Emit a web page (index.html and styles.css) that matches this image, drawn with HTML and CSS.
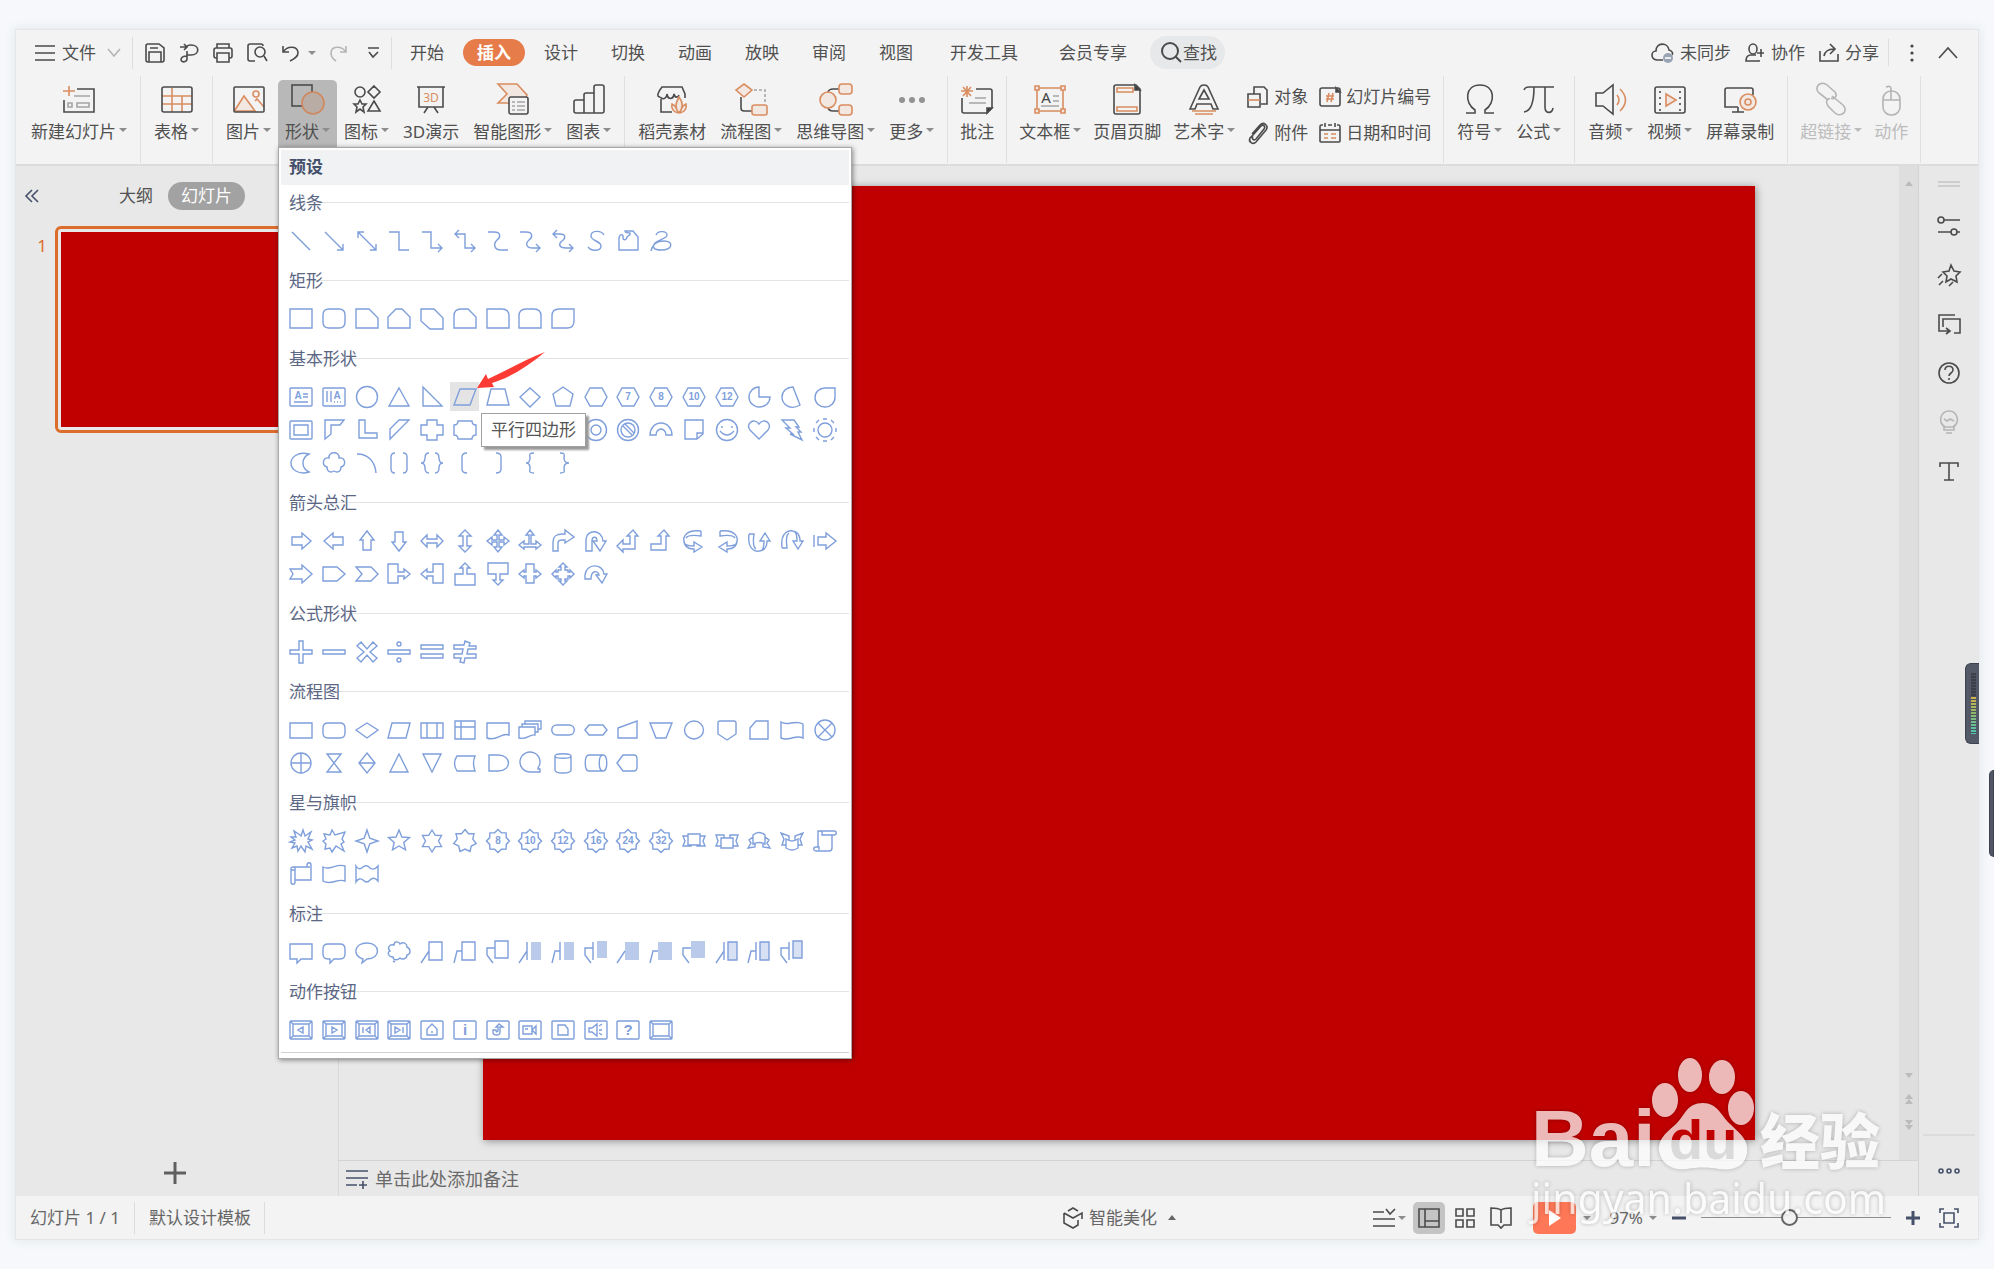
FILE: index.html
```html
<!DOCTYPE html>
<html lang="zh-CN">
<head>
<meta charset="utf-8">
<title>演示文稿</title>
<link rel="stylesheet" href="styles.css">
</head>
<body>
<div class="app">
  <header class="menubar">
    <button class="mb file"><svg width="20" height="20" viewBox="0 0 20 20"><path d="M0 3H20M0 10H20M0 17H20"/></svg>文件<svg class="pale chev" width="14" height="10" viewBox="0 0 14 10"><path d="M1 1L7 8L13 1"/></svg></button>
    <i class="vline"></i>
    <div class="quick">
      <button aria-label="保存"><svg width="20" height="20" viewBox="0 0 20 20"><path d="M1 3Q1 1 3 1H14L19 5V17Q19 19 17 19H3Q1 19 1 17zM4 19V9H16V19M5 5H13"/></svg></button>
      <button aria-label="输出"><svg width="20" height="20" viewBox="0 0 20 20"><path d="M1 4H8M5 1L8 4L5 7M8 4Q8 2 12 2C21 2 21 12 12 12H8V16C8 19 3 20 2 17C2 14 4 13 8 13M8 12V8"/></svg></button>
      <button aria-label="打印"><svg width="20" height="20" viewBox="0 0 20 20"><path d="M4 5V1H16V5M4 15H3Q1 15 1 13V7Q1 5 3 5H17Q19 5 19 7V13Q19 15 17 15H16M4 10H16V19H4z"/></svg></button>
      <button aria-label="预览"><svg width="21" height="20" viewBox="0 0 21 20"><path d="M8 18H3Q1 18 1 16V3Q1 1 3 1H14Q16 1 16 3M17 13L20 18"/><ellipse cx="13" cy="9" rx="5" ry="5"/></svg></button>
      <button class="undo" aria-label="撤销"><svg width="17" height="18" viewBox="0 0 17 18"><path d="M1 2V8H7M1 8C6 1 16 2 16 9C16 13 12 15 8 17"/></svg><i class="caret"></i></button>
      <button class="pale redo" aria-label="恢复"><svg width="17" height="18" viewBox="0 0 17 18"><path d="M16 2V8H10M16 8C11 1 1 2 1 9C1 13 3 15 6 17"/></svg></button>
      <button aria-label="更多命令"><svg width="11" height="12" viewBox="0 0 11 12"><path d="M0 1H11M1 5L5 10L10 5"/></svg></button>
    </div>
    <i class="vline"></i>
    <nav class="tabs">
      <button>开始</button><button class="on">插入</button><button>设计</button><button>切换</button><button>动画</button><button>放映</button><button>审阅</button><button>视图</button><button class="wide">开发工具</button><button class="wide">会员专享</button>
      <button class="find"><svg width="22" height="22" viewBox="0 0 22 22"><ellipse cx="9" cy="9" rx="8" ry="8"/><path d="M14 14L20 20"/></svg>查找</button>
    </nav>
    <div class="account">
      <button class="mb"><svg width="23" height="22" viewBox="0 0 23 22"><path d="M12 18H6C-1 17 0 9 5 9C5 0 17 0 18 8C22 9 22 12 21 13"/><circle cx="17" cy="16" r="5" fill="#98a3b3" stroke="none"/><path d="M14 16H20" stroke="#fff"/></svg>未同步</button>
      <button class="mb"><svg width="20" height="20" viewBox="0 0 20 20"><ellipse cx="8" cy="6" rx="4" ry="5"/><path d="M11 12H6Q1 12 1 18H14V17M12 10H19M16 6V14"/></svg>协作</button>
      <button class="mb"><svg width="20" height="20" viewBox="0 0 20 20"><path d="M1 8V18H19V11M5 13C6 8 9 6 15 6M11 1L16 6L11 11"/></svg>分享</button>
    </div>
    <i class="vline short"></i>
    <button class="more" aria-label="更多"><svg width="4" height="18" viewBox="0 0 4 18"><g fill="#444" stroke="none"><circle cx="2" cy="2" r="1.6"/><circle cx="2" cy="9" r="1.6"/><circle cx="2" cy="16" r="1.6"/></g></svg></button>
    <button aria-label="折叠功能区"><svg width="20" height="12" viewBox="0 0 20 12"><path d="M1 11L10 1L19 11"/></svg></button>
  </header>

  <div class="ribbon">
    <div class="group">
      <button class="tool"><svg viewBox="0 0 32 32"><path d="M14 6H31V29H1V17"/><path class="o" d="M6 3V13M0 8H12"/><path class="g" d="M11 13H27M14 20H26V24H14zM5 20H9V24H5z"/></svg><span>新建幻灯片<i class="caret"></i></span></button>
    </div>
    <div class="group">
      <button class="tool"><svg viewBox="0 0 32 32"><path class="o" d="M1 13H31M1 21H31M11 5V29M21 13V29"/><rect x="1" y="4" width="30" height="25" rx="2"/></svg><span>表格<i class="caret"></i></span></button>
    </div>
    <div class="group">
      <button class="tool"><svg viewBox="0 0 32 32"><path class="of" d="M2 27L11 13L22 28H2z"/><path class="o" d="M22 18L24 16L31 24"/><rect x="1" y="4" width="30" height="25" rx="1"/><circle class="o" cx="23" cy="11" r="3"/></svg><span>图片<i class="caret"></i></span></button>
      <div class="anchor">
        <button class="tool on" aria-expanded="true"><svg viewBox="0 0 32 32"><rect x="0" y="2" width="20" height="21"/><ellipse cx="21" cy="20" rx="11" ry="11" fill="#b9aca5" stroke="#d1875c"/></svg><span>形状<i class="caret"></i></span></button>
        <section class="shapes" id="shapes" aria-label="形状">
          <h2>预设</h2>
          <div class="tip" role="tooltip">平行四边形</div>
          <svg class="pointer" width="70" height="38" viewBox="0 0 70 38"><path d="M1 37L10 23L12 28C30 20 48 9 69 1C52 15 34 27 16 32L18 36z" fill="#fd3b35" stroke="none"/></svg>
        </section>
      </div>
      <button class="tool"><svg viewBox="0 0 32 32"><ellipse cx="9" cy="9" rx="5" ry="5"/><path d="M23 3L29 9L23 15L17 9zM9 17L11 21H15L12 24L13 29L9 26L5 29L6 24L3 21H7zM23 18L29 28H17z"/></svg><span>图标<i class="caret"></i></span></button>
      <button class="tool"><svg viewBox="0 0 32 32"><path d="M2 4H30M4 4V24H28V4M13 24L9 30M19 24L23 30"/><text x="16" y="19" font-size="12" text-anchor="middle" class="ot">3D</text></svg><span>3D演示</span></button>
      <button class="tool"><svg viewBox="0 0 32 32"><path class="of" d="M1 1H20L30 12L26 20H1L10 11z"/><rect x="12" y="14" width="19" height="17" rx="2" fill="#f3f3f3"/><path class="g" d="M15 19H18M20 19H28M15 23H18M20 23H28M15 27H18M20 27H28"/></svg><span>智能图形<i class="caret"></i></span></button>
      <button class="tool"><svg viewBox="0 0 32 32"><path d="M1 19Q1 17 3 17H11V30H3Q1 30 1 28zM11 30V12Q11 10 13 10H21V30zM21 30V4Q21 2 23 2H29Q31 2 31 4V28Q31 30 29 30z"/></svg><span>图表<i class="caret"></i></span></button>
    </div>
    <div class="group">
      <button class="tool"><svg viewBox="0 0 32 32"><path d="M5 16V29H16M4 14C0 14 2 9 6 4H26L29 11V15M4 14C8 18 11 14 11 11C12 17 17 17 18 11C19 15 22 15 23 12"/><path class="of" d="M23 30C18 25 20 19 23 14C27 19 27 25 23 30zM22 30C17 29 15 25 16 21C19 22 21 26 22 30M24 30C29 29 31 25 30 21C27 22 25 26 24 30"/></svg><span>稻壳素材</span></button>
      <button class="tool"><svg viewBox="0 0 32 32"><path d="M6 14V25Q6 28 9 28H17"/><path class="g" stroke-dasharray="3 2" d="M19 7H30V21"/><path class="of" d="M9 1L17 7L9 14L1 7zM20 22H30Q32 22 32 24V30Q32 32 30 32H20Q17 32 17 30V24Q17 22 20 22z"/></svg><span>流程图<i class="caret"></i></span></button>
      <button class="tool"><svg viewBox="0 0 32 32"><path d="M8 9Q9 6 13 6H19M8 25Q9 28 13 28H19"/><ellipse class="of" cx="8" cy="17" rx="8" ry="8"/><rect class="of" x="19" y="1" width="13" height="10" rx="3"/><rect class="of" x="19" y="22" width="13" height="10" rx="3"/></svg><span>思维导图<i class="caret"></i></span></button>
      <button class="tool"><svg viewBox="0 0 32 32"><g fill="#929292" stroke="none"><circle cx="6" cy="17" r="3"/><circle cx="16" cy="17" r="3"/><circle cx="26" cy="17" r="3"/></g></svg><span>更多<i class="caret"></i></span></button>
    </div>
    <div class="group snug">
      <button class="tool"><svg viewBox="0 0 32 32"><path d="M15 6H29Q31 6 31 8V25L26 30H3Q1 30 1 28V15"/><path d="M31 25L26 30V25z" fill="#333"/><path class="g" d="M14 15H25M8 20H25"/><path class="o" d="M6 3V14M0 8H12M2 4L10 13M10 4L2 13"/></svg><span>批注</span></button>
    </div>
    <div class="group snug">
      <button class="tool"><svg viewBox="0 0 32 32"><path class="o" d="M3 5H29V28H3z"/><path class="of" d="M1 3H5V7H1zM27 3H31V7H27zM1 26H5V30H1zM27 26H31V30H27z"/><path class="g" d="M19 13H25M19 18H25M7 23H25"/><text x="12" y="20" font-size="15" text-anchor="middle" class="dt">A</text></svg><span>文本框<i class="caret"></i></span></button>
      <button class="tool"><svg viewBox="0 0 32 32"><path d="M3 4Q3 2 5 2H25L29 6V29Q29 31 27 31H5Q3 31 3 29z"/><path d="M24 2V7H29z" fill="#333"/><path class="o" d="M6 5H22V9H6zM6 24H26V28H6z"/></svg><span>页眉页脚</span></button>
      <button class="tool"><svg viewBox="0 0 32 32"><path d="M2 26L12 4Q13 2 16 2Q19 2 20 4L30 26H25L23 21H9L7 26zM11 16H21L16 7z"/><path class="o" d="M4 28H28M7 31H25"/></svg><span>艺术字<i class="caret"></i></span></button>
      <div class="pairs">
        <button><svg width="22" height="22" viewBox="0 0 22 22"><path d="M7 8V1H17L20 4V18H14M1 8H13V21H1z"/><path class="o" d="M1 14H13"/></svg>对象</button>
        <button><svg width="22" height="22" viewBox="0 0 22 22"><rect x="1" y="2" width="20" height="18" rx="2"/><path d="M17 2L21 6H17z" fill="#333"/><path class="o" d="M10 7L8 16M14 7L12 16M7 10H15M7 13H15"/></svg>幻灯片编号</button>
        <button><svg width="22" height="22" viewBox="0 0 22 22"><path d="M6 13L14 4C16 2 19 4 17 7L9 17C7 19 4 17 6 14M6 13L3 16C1 20 6 23 9 20L19 8C22 4 17 -1 13 3L5 12"/></svg>附件</button>
        <button><svg width="22" height="22" viewBox="0 0 22 22"><path d="M4 3H2Q1 3 1 5V19Q1 20 2 20H20Q21 20 21 19V5Q21 3 20 3H18M9 3H13M6 1V5M16 1V5M1 8H21"/><path class="o" d="M5 12H9M12 12H17M5 16H9M12 16H17"/></svg>日期和时间</button>
      </div>
    </div>
    <div class="group">
      <button class="tool"><svg viewBox="0 0 32 32"><path d="M2 30H11V27C0 20 1 2 16 2C31 2 32 20 21 27V30H30"/></svg><span>符号<i class="caret"></i></span></button>
      <button class="tool"><svg viewBox="0 0 32 32"><path d="M1 7Q2 4 6 4H31M11 4C11 17 9 28 1 29M22 4V24C22 31 29 31 30 25"/></svg><span>公式<i class="caret"></i></span></button>
    </div>
    <div class="group">
      <button class="tool"><svg viewBox="0 0 32 32"><path d="M1 10H8L18 2V31L8 23H1z"/><path class="o" d="M22 12Q26 17 22 22M25 6Q36 17 25 28"/></svg><span>音频<i class="caret"></i></span></button>
      <button class="tool"><svg viewBox="0 0 32 32"><rect x="1" y="4" width="30" height="26" rx="2"/><path stroke-dasharray="2 4" d="M6 8V28M26 8V28"/><path class="of" d="M12 11L22 17L12 23z"/></svg><span>视频<i class="caret"></i></span></button>
      <button class="tool"><svg viewBox="0 0 32 32"><path d="M29 12V7Q29 5 27 5H3Q1 5 1 7V24H14M14 24V29M8 29H20"/><circle class="of" cx="24" cy="19" r="8"/><circle class="o" cx="24" cy="19" r="3"/></svg><span>屏幕录制</span></button>
    </div>
    <div class="group snug off">
      <button class="tool" disabled><svg viewBox="0 0 32 32"><path d="M13 17L4 10C-2 4 6 -3 12 2L20 9C23 13 19 17 16 15M17 13L28 22C34 28 26 35 20 30L13 23C10 19 12 15 15 16"/></svg><span>超链接<i class="caret"></i></span></button>
      <button class="tool" disabled><svg viewBox="0 0 32 32"><rect x="8" y="8" width="17" height="24" rx="8"/><path d="M8 17H25M16 17V6Q16 2 11 4"/></svg><span>动作</span></button>
    </div>
  </div>

  <main class="work">
    <aside class="outline">
      <div class="outline-head">
        <button aria-label="收起"><svg class="navy" width="14" height="14" viewBox="0 0 14 14"><path d="M7 1L1 7L7 13M13 1L7 7L13 13"/></svg></button>
        <div class="switch"><button>大纲</button><button class="on">幻灯片</button></div>
      </div>
      <div class="thumb-row"><span>1</span><button class="thumb" aria-label="幻灯片 1"></button></div>
      <button class="add" aria-label="新建幻灯片"><svg width="22" height="22" viewBox="0 0 22 22"><path d="M11 0V22M0 11H22"/></svg></button>
    </aside>
    <div class="stage">
      <div class="canvas">
        <div class="slide"></div>
        <div class="scroll">
          <i class="up"></i>
          <div><i class="down"></i><span><i class="up"></i><i class="up"></i></span><span><i class="down"></i><i class="down"></i></span></div>
        </div>
      </div>
      <label class="notes"><svg class="navy" width="22" height="20" viewBox="0 0 22 20"><path d="M0 2H22M0 9H22M0 16H11M13 16H21M17 12V20"/></svg><input type="text" placeholder="单击此处添加备注" aria-label="备注"></label>
    </div>
    <aside class="rail">
      <svg class="grip" width="22" height="6" viewBox="0 0 22 6"><path d="M0 1H22M0 5H22"/></svg>
      <button aria-label="属性"><svg width="22" height="22" viewBox="0 0 22 22"><path d="M6 5H22M0 17H13M19 17H22"/><circle cx="3" cy="5" r="3"/><circle cx="16" cy="17" r="3"/></svg></button>
      <button aria-label="动画"><svg width="22" height="22" viewBox="0 0 22 22"><path d="M13 1L16 7L22 8L18 12L19 18L13 15L8 18L9 12L5 8L11 7zM4 10L0 14M5 17L1 21M15 18L11 22"/></svg></button>
      <button aria-label="切换"><svg width="22" height="22" viewBox="0 0 22 22"><path d="M17 2H1V18H11M8 15L12 18L8 21M5 14V6H22V20H16"/></svg></button>
      <button aria-label="帮助"><svg width="22" height="22" viewBox="0 0 22 22"><circle cx="11" cy="11" r="10"/><path d="M7 8C7 3 15 3 15 8C15 11 11 11 11 14M11 16V18"/></svg></button>
      <button class="pale" aria-label="灵感"><svg width="22" height="24" viewBox="0 0 22 24"><path d="M7 17C-1 12 3 1 11 1C19 1 23 12 15 17M6 17H16V20H6zM8 23H14M6 9L9 11L12 9L16 11"/></svg></button>
      <button aria-label="文字"><svg width="22" height="22" viewBox="0 0 22 22"><path d="M2 7V3H20V7M11 3V20M6 20H16"/></svg></button>
      <div class="rail-end"><button aria-label="更多"><svg class="navy" width="22" height="8" viewBox="0 0 22 8"><circle cx="3" cy="4" r="2"/><circle cx="11" cy="4" r="2"/><circle cx="19" cy="4" r="2"/></svg></button></div>
    </aside>
  </main>

  <footer class="status">
    <div class="left"><span>幻灯片 1 / 1</span><span>默认设计模板</span></div>
    <button class="beauty"><svg width="20" height="22" viewBox="0 0 20 22"><path d="M5 4L10 1L15 4M1 6L10 11L19 6V12M1 6V16L10 21L15 18V13"/></svg>智能美化<i class="caret upc"></i></button>
    <div class="views">
      <button class="notebtn" aria-label="备注"><svg width="22" height="20" viewBox="0 0 22 20"><path d="M0 4H11M13 1L17 6L22 1M0 11H22M0 18H22"/></svg><i class="caret"></i></button>
      <button class="sq on" aria-label="普通视图"><svg width="22" height="20" viewBox="0 0 22 20"><path d="M1 1H21V19H1zM7 1V19M7 13H21"/></svg></button>
      <button class="sq" aria-label="浏览视图"><svg width="20" height="20" viewBox="0 0 20 20"><path d="M1 1H8V8H1zM12 1H19V8H12zM1 12H8V19H1zM12 12H19V19H12z"/></svg></button>
      <button class="sq" aria-label="阅读视图"><svg width="22" height="22" viewBox="0 0 22 22"><path d="M11 3Q8 1 1 1V18H8L11 21L14 18H21V1Q14 1 11 3V16"/></svg></button>
      <button class="play" aria-label="放映"><svg width="14" height="16" viewBox="0 0 14 16"><path d="M1 0L13 8L1 16z" fill="#fff" stroke="none"/></svg></button>
      <i class="caret"></i>
      <button class="pct">97%<i class="caret"></i></button>
      <button aria-label="缩小"><svg class="navy b" width="14" height="14" viewBox="0 0 14 14"><path d="M0 7H14"/></svg></button>
      <input type="range" min="0" max="100" value="46" aria-label="缩放">
      <button aria-label="放大"><svg class="navy b" width="14" height="14" viewBox="0 0 14 14"><path d="M0 7H14M7 0V14"/></svg></button>
      <button class="fit" aria-label="适应窗口"><svg class="navy" width="20" height="20" viewBox="0 0 20 20"><path d="M1 5V1H5M15 1H19V5M19 15V19H15M5 19H1V15M5 5H15V15H5z"/></svg></button>
    </div>
  </footer>
  <div class="meter"><i></i></div>
</div>
<div class="dock"></div>
<div class="mark" aria-hidden="true">
  <div class="mark-top"><span class="bai">Bai</span><div class="paw"><svg width="104" height="114" viewBox="0 0 104 114"><g fill="#fff" stroke="none"><ellipse cx="14" cy="43" rx="13" ry="17"/><ellipse cx="39" cy="18" rx="12" ry="17"/><ellipse cx="71" cy="20" rx="13" ry="17"/><ellipse cx="90" cy="51" rx="13" ry="17"/><path d="M52 46C66 46 70 58 78 66C88 76 98 82 96 96C94 110 82 114 68 112C58 110 46 110 36 112C20 114 10 106 8 94C7 80 18 74 26 66C34 58 36 46 52 46z"/></g></svg><b>du</b></div><span class="jy">经验</span></div>
  <div class="url">jingyan.baidu.com</div>
</div>
<script src="shapes.js"></script>
</body>
</html>
```

FILE: styles.css
```css
* { box-sizing: border-box; }
body {
  margin: 0;
  min-height: 100vh;
  padding: 29px 15px 29px 15px;
  background: #f6f8fb;
  color: #505050;
  font: 17px/24px "Noto Sans", "Noto Sans CJK SC", sans-serif;
  display: flex;
  position: relative;
  overflow-x: hidden;
}
button {
  border: 0; padding: 0; background: none; color: inherit; font: inherit;
  display: flex; align-items: center; white-space: nowrap;
}
svg { fill: none; stroke: #4b4b4b; stroke-width: 1.6; flex: none; overflow: visible; }
.o { stroke: #d98d60; }
.of { stroke: #d98d60; fill: #f2e7e1; }
.g { stroke: #a5a5a5; }
.ot { fill: #d98d60; stroke: none; }
.dt { fill: #444; stroke: none; }
.navy { stroke: #46506a; }
.pale svg, svg.pale { stroke: #b5b5b5; }
.caret {
  display: inline-block; margin-left: 3px;
  border: 4px solid transparent; border-top: 4px solid #8c8c8c; border-bottom: 0;
  vertical-align: 6px;
}
.app {
  position: relative; flex: 1; display: flex; flex-direction: column; min-width: 0;
  background: #f3f3f3; border: 1px solid #e4e6e8; box-shadow: 0 0 10px #dfe3e8;
}

/* menu bar */
.menubar { display: flex; align-items: center; height: 45px; padding: 0 20px 0 19px; }
.vline { width: 1px; height: 32px; background: #dedede; }
.vline.short { height: 27px; }
.mb { gap: 7px; }
.chev { margin: 0 11px 0 4px; }
.quick { display: flex; align-items: center; gap: 14px; padding: 0 12px; }
.undo .caret { margin-left: 9px; }
.redo { margin-right: 7px; }
.tabs { display: flex; gap: 5px; padding-left: 4px; flex: 1; align-items: center; }
.tabs button { height: 27px; padding: 0 14px; border-radius: 14px; }
.tabs .wide { padding: 0 18px; }
.tabs .on { background: #e77c4b; color: #fff; font-weight: 700; }
.tabs .find { height: 33px; padding: 0 8px 0 11px; border-radius: 17px; background: #e7e8ea; }
.find svg { stroke-width: 2; }
.account { display: flex; gap: 14px; padding-right: 9px; }
.account .mb { gap: 6px; }
.more { margin: 0 24px 0 21px; }

/* ribbon */
.ribbon { display: flex; height: 91px; padding-top: 1px; border-bottom: 2px solid #dcdcdc; }
.group { display: flex; gap: 14px; height: 87px; padding: 4px 13px 0; border-right: 1px solid #e0e0e0; }
.group:first-child { padding-left: 15px; }
.group.snug { gap: 12px; padding: 4px 12px 0; }
.tool { flex-direction: column; height: 67px; gap: 5px; padding-top: 3px; }
.tool svg { width: 32px; height: 32px; }
.tool.on { background: #b8b8b8; border-radius: 5px 5px 0 0; margin: 0 -7px; padding: 3px 7px 0; }
.off { color: #bcbcbc; }
.off svg { stroke: #b4b4b4; }
.off .caret { border-top-color: #bcbcbc; }
.pairs { display: grid; grid-template-columns: auto auto; column-gap: 11px; height: 67px; padding-top: 3px; align-content: start; grid-auto-rows: 36px; }
.pairs button { gap: 5px; height: 28px; }
.anchor { position: relative; }

/* shape gallery */
.shapes {
  position: absolute; z-index: 5; top: 67px; left: -7px; width: 574px; padding: 2px 2px 5px;
  background: #fff; border: 1px solid #a9a9a9; box-shadow: 1px 1px 5px rgba(0,0,0,.45);
}
.shapes h2 { margin: 0; height: 35px; padding: 0 8px; background: #f0f2f4; color: #444f6b; font-size: 17px; line-height: 34px; }
.shapes h3 {
  margin: 0; height: 39px; padding: 6px 8px 0; color: #5b6784; font-size: 17px; font-weight: 400; line-height: 24px;
  background: linear-gradient(#e3e3e3, #e3e3e3) 8px 17px / 100% 1px no-repeat;
}
.cells { display: grid; grid-template-columns: repeat(17, 1fr); grid-auto-rows: 33px; padding: 0 8px 0 4px; margin-bottom: 6px; place-items: center; }
.cells button { width: 29px; height: 29px; justify-content: center; }
.cells button.hot { background: #e4e4e4; }
.cells svg { width: 24px; height: 24px; stroke: #7f9fdb; stroke-width: 1.4; }
.cells text { font: 700 10px "Liberation Sans", sans-serif; fill: #7f9fdb; stroke: none; text-anchor: middle; }
.cells text.big { font-size: 15px; }
.cells .f { fill: #b9caeb; stroke: none; }
.cells .h { fill: #d8e1f3; }
.last { border-top: 1px solid #d0d0d0; }
.tip {
  position: absolute; left: 202px; top: 265px; padding: 4px 9px; background: #fff; border: 1px solid #a0a0a0;
  box-shadow: 3px 3px 2px #999; color: #555;
}
.pointer { position: absolute; left: 197px; top: 203px; }

/* workspace */
.work { flex: 1; display: flex; background: #e8e8e8; }
.outline { width: 323px; border-right: 1px solid #d9d9d9; display: flex; flex-direction: column; }
.outline-head { display: flex; align-items: center; height: 60px; padding-left: 9px; }
.switch { display: flex; align-items: center; padding-left: 80px; gap: 15px; }
.switch .on { height: 28px; padding: 0 13px; border-radius: 14px; background: #a2a2a2; color: #fff; }
.thumb-row { display: flex; gap: 8px; padding-left: 21px; color: #dc6d2c; }
.thumb-row span { width: 10px; margin: 8px 0 0 0; text-align: right; }
.thumb { width: 270px; height: 207px; border: 3px solid #dc6d2c; border-radius: 6px; background: #c00000 content-box; padding: 3px; }
.add { margin: auto auto 12px 148px; }
.add svg { stroke-width: 3; stroke: #606060; }
.stage { flex: 1; display: flex; flex-direction: column; min-width: 0; }
.canvas { flex: 1; display: flex; }
.slide { flex: 1; align-self: center; margin: 0 144px; aspect-ratio: 4 / 3; background: #c00000; box-shadow: 1px 1px 8px rgba(0,0,0,.4); }
.scroll { width: 20px; background: #dedede; border-right: 1px solid #d3d3d3; padding: 15px 0 30px; display: flex; flex-direction: column; justify-content: space-between; align-items: center; }
.scroll div { display: flex; flex-direction: column; gap: 16px; align-items: center; }
.scroll i { display: block; border: 4px solid transparent; }
.scroll .up { border-top: 0; border-bottom: 5px solid #bbb; }
.scroll .down { border-bottom: 0; border-top: 5px solid #bbb; }
.notes { display: flex; align-items: center; gap: 7px; height: 36px; padding: 0 7px; border-top: 1px solid #d3d3d3; border-right: 1px solid #d3d3d3; }
.notes input { flex: 1; border: 0; padding: 0; background: none; font: inherit; font-size: 18px; }
.notes input::placeholder { color: #6a6a6a; opacity: 1; }
.rail { width: 59px; display: flex; flex-direction: column; align-items: center; padding-top: 15px; gap: 27px; }
.rail button { height: 22px; }
.rail .grip { stroke: #c3c3c3; margin-bottom: 1px; }
.rail-end { margin-top: auto; width: 52px; height: 62px; padding-top: 24px; border-top: 2px solid #dcdcdc; display: flex; justify-content: center; align-items: flex-start; }

/* status bar */
.status { display: flex; align-items: center; justify-content: space-between; height: 43px; padding-right: 19px; color: #666; position: relative; }
.left { display: flex; }
.left span { padding: 4px 14px; border-right: 1px solid #dcdcdc; }
.left span + span { padding-right: 13px; }
.beauty { gap: 6px; position: absolute; left: 1047px; }
.upc { border-top: 0; border-bottom: 5px solid #666; margin-left: 5px; }
.views { display: flex; align-items: center; }
.sq { width: 32px; height: 32px; justify-content: center; border-radius: 5px; }
.sq.on { background: #c4c4c4; }
.sq + .sq { margin-left: 4px; }
.notebtn { margin-right: 7px; }
.play { width: 43px; height: 32px; margin-left: 16px; border-radius: 5px; background: #fe7858; justify-content: center; }
.play + .caret { margin: 0 18px 0 7px; }
.pct { margin-right: 15px; }
.pct .caret { margin-left: 6px; }
.b { stroke-width: 3; }
.views input { appearance: none; width: 190px; height: 18px; margin: 0 15px; background: linear-gradient(#8d8d8d, #8d8d8d) center / 100% 1px no-repeat; }
.views input::-webkit-slider-thumb { appearance: none; width: 17px; height: 17px; border-radius: 50%; border: 2px solid #666; background: #f3f3f3; }
.fit { margin-left: 19px; }

/* edge widgets */
.meter { position: absolute; right: -1px; top: 633px; width: 14px; height: 81px; padding: 9px 3px 9px 5px; border-radius: 6px 0 0 6px; background: #535967; border: 1px solid #3d4250; border-right: 0; }
.meter i { display: block; height: 100%; background: repeating-linear-gradient(transparent 0 2px, #4b505c 2px 3px), linear-gradient(#3c404a 0 38%, #d3b34a 39%, #8fb768 65%, #4ec5b5); }
.dock { position: absolute; right: 0; top: 770px; width: 5px; height: 87px; border-radius: 5px 0 0 5px; background: #505664; border: 1px solid #3d4250; }

/* watermark */
.mark { position: absolute; z-index: 8; right: 107px; top: 1057px; width: 356px; opacity: .72; color: #fff; pointer-events: none; filter: drop-shadow(0 0 2px rgba(0,0,0,.35)); }
.mark-top { display: flex; align-items: flex-end; height: 114px; }
.bai { font: 700 80px/60px "Liberation Sans", sans-serif; width: 120px; padding-bottom: 2px; }
.paw { position: relative; width: 104px; height: 114px; margin-right: 5px; }
.paw b {
  position: absolute; left: 18px; top: 58px; font: 700 56px/50px "Liberation Sans", sans-serif;
  color: transparent; background: linear-gradient(#c00000 25px, #d6d6d6 25px); background-clip: text; -webkit-background-clip: text;
}
.jy { font: 900 60px/66px "Noto Sans CJK SC", sans-serif; white-space: nowrap; }
.url { font: 41px/50px "Noto Sans", sans-serif; margin-top: 2px; }
```

FILE: shapes.js
```js
// Shape gallery: every entry is either path data or SVG markup on a 24-unit grid.
const p = (d, c) => `<path d="${d}"${c ? ` class="${c}"` : ''}/>`;
const t = (s, y = 15, x = 12, c = '') => `<text x="${x}" y="${y}" class="${c}">${s}</text>`;
const turn = (a, d) => `<g transform="rotate(${a} 12 12)">${p(d)}</g>`;
const flip = d => `<g transform="translate(24 0) scale(-1 1)">${p(d)}</g>`;
const oval = (r, rx = r) => `<ellipse cx="12" cy="12" rx="${rx}" ry="${r}"/>`;
const star = (n, R, r) => {
  let d = '';
  for (let i = 0; i < n * 2; i++) {
    const a = Math.PI * i / n, q = i % 2 ? r : R;
    d += (i ? 'L' : 'M') + (12 + q * Math.sin(a)).toFixed(1) + ' ' + (12 - q * Math.cos(a)).toFixed(1);
  }
  return d + 'z';
};
const HEX = 'M1 12L6 3H18L23 12L18 21H6z';
const FRAME = 'M2 3H22Q23 3 23 4V20Q23 21 22 21H2Q1 21 1 20V4Q1 3 2 3z';
const BEVEL = FRAME + 'M4 6H20V18H4zM1 3L4 6M23 3L20 6M1 21L4 18M23 21L20 18';
const HEAD = 'M18 15L22 19L18 23', TAIL = 'M6 1L2 5L6 9';
const CURVE = 'M19 2C2 0 0 10 3 15C5 17 9 17 12 17V13L20 18L12 23V20C3 20 2 14 2 12M19 2V7C12 6 6 6 4 9';
const BRACE = 'M9 2C6 2 5 4 5 7C5 10 4 12 1 12C4 12 5 14 5 17C5 20 6 22 9 22';
const BRACE2 = 'M15 2C18 2 19 4 19 7C19 10 20 12 23 12C20 12 19 14 19 17C19 20 18 22 15 22';
const A1 = 'M1 23L9 11', A2 = 'M1 23L4 11H9', A3 = 'M9 8H1V15L7 23', BAR = 'M9 2V20';
const groups = [
  ['线条', ['M3 3L21 21', 'M3 3L21 21M21 15V21H15', 'M3 3L21 21M21 15V21H15M3 9V3H9', 'M2 3H12V21H22',
    'M2 3H11V19H22' + HEAD, 'M2 5H12V19H22' + HEAD + TAIL, 'M2 3H8C15 3 15 8 11 11C7 15 8 21 15 21H22',
    'M2 3H8C15 3 15 8 11 11C7 15 8 19 15 19H22' + HEAD, 'M2 5H9C15 5 15 9 11 12C7 15 8 19 15 19H22' + HEAD + TAIL,
    'M20 6C17 1 7 1 7 7C7 12 17 12 17 17C17 22 8 23 4 18', 'M9 2H17L22 8V21H3V9C4 4 8 5 7 9C7 12 11 11 11 8C12 6 15 7 14 4C12 4 9 4 9 2z',
    'M7 6C9 1 18 2 18 6C18 10 10 10 6 14C2 19 6 21 12 21C24 21 25 12 15 12C7 12 3 17 2 22']],
  ['矩形', ['M1 2H23V21H1z', 'M7 2H17Q23 2 23 8V15Q23 21 17 21H7Q1 21 1 15V8Q1 2 7 2z', 'M1 2H14L23 11V21H1z', 'M1 21V10L9 2H15L23 10V21z',
    'M1 2H14L23 11V22H10L1 14z', 'M1 21V9Q1 2 8 2H15L23 10V21z', 'M1 2H16Q23 2 23 9V21H1z', 'M1 21V9Q1 2 8 2H16Q23 2 23 9V21z',
    'M1 21V9Q1 2 8 2H23V14Q23 21 16 21z']],
  ['基本形状', [p(FRAME + 'M14 9H19M14 12H19M5 17H19') + t('A', 14, 9), p(FRAME + 'M5 6V17M9 6V17M12 17H13M15 17H16M18 17H19') + t('A', 14, 15),
    oval(10.5), 'M12 3L22 21H2z', 'M3 2L22 21H3z', 'M7 4H23L17 20H1z', 'M5 4H19L23 20H1z', 'M12 3L22 12L12 22L2 12z',
    'M12 2L22 9L19 21H5L2 9z', HEX, p(HEX) + t('7'), p(HEX) + t('8'), p(HEX) + t('10'), p(HEX) + t('12'),
    'M12 2V12H23C23 18 18 22 12 22A10 10 0 0 1 12 2z', 'M13 2L20 20C10 26 2 19 2 12C2 6 7 2 13 2z', 'M22 3V12A10 9.5 0 1 1 12 3z',
    FRAME + 'M5 7H19V17H5z', 'M3 2H22L18 7H9V16L3 21z', 'M4 2H10V15H22V20H4z', 'M12 2H22L3 21V11z', 'M7 2H17V7H23V17H17V22H7V17H1V7H7z',
    'M5 3H19Q19 7 23 7V17Q19 17 19 21H5Q5 17 1 17V7Q5 7 5 3z', 'M4 5C4 1 20 1 20 5V19C20 23 4 23 4 19zM4 5C4 9 20 9 20 5', 'M2 7L7 2H22V17L17 22H2zM2 7H17V22M17 7L22 2', BEVEL,
    oval(10.5) + oval(5), oval(10.5) + oval(7) + p('M7 8L16 17M9 6L18 15'), 'M1 17A11 12 0 0 1 23 17H17A5 6 0 0 0 7 17z', 'M3 2H21V16L15 21H3zM15 21V15H21',
    oval(10.5) + p('M7 8V10M17 8V10M5 13Q12 21 19 13'), 'M12 21L3 12C-2 6 7 -1 12 6C17 -1 26 6 21 12z', 'M2 2H14L19 9H16L21 14H18L22 22L10 16H13L6 10H10z',
    oval(7) + p('M10 1H14M10 23H14M1 10V14M23 10V14M3 5L6 2M21 5L18 2M3 19L6 22M21 19L18 22'),
    'M20 3C8 0 2 7 2 12C2 19 10 24 20 21C12 17 12 7 20 3z', 'M7 7C6 0 18 0 17 7C23 6 25 14 19 16C19 21 15 22 12 20C9 22 5 21 5 16C-1 14 1 6 7 7z',
    'M2 3C13 3 20 10 21 22', 'M8 2Q4 2 4 6V18Q4 22 8 22M16 2Q20 2 20 6V18Q20 22 16 22', BRACE + BRACE2,
    'M14 2Q9 2 9 6V18Q9 22 14 22', 'M10 2Q15 2 15 6V18Q15 22 10 22', 'M16 2C10 2 12 4 12 7C12 10 11 12 8 12C11 12 12 14 12 17C12 20 10 22 16 22', 'M9 2C15 2 13 4 13 7C13 10 14 12 18 12C14 12 13 14 13 17C13 20 15 22 9 22']],
  ['箭头总汇', ['M3 8H13V4L22 12L13 20V16H3z', 'M21 8H11V4L2 12L11 20V16H21z', 'M8 21V11H5L12 2L19 11H16V21z', 'M8 3V13H5L12 22L19 13H16V3z',
    'M1 12L7 6V10H17V6L23 12L17 18V14H7V18z', 'M12 1L18 7H14V17H18L12 23L6 17H10V7H6z',
    'M12 1L16 6H13V11H18V8L23 12L18 16V13H13V18H16L12 23L8 18H11V13H6V16L1 12L6 8V11H11V6H8z', 'M12 1L16 6H13V15H18V12L23 16L18 20V18H6V20L1 16L6 12V15H11V6H8z',
    'M2 22V13C2 7 5 5 12 5H14V1L23 8L14 14V11H11Q7 11 7 14V22z', 'M2 22V10C3 0 18 0 19 12H22L16 22L9 12H13C13 7 8 7 8 12V22z',
    'M1 17L7 11V15H14V7H11L17 1L22 7H19V20H7V23z', 'M2 15H12V7H9L15 1L20 7H17V21H2z', CURVE, flip(CURVE), turn(-90, CURVE), `<g transform="translate(24 0) scale(-1 1) rotate(90 12 12)">${p(CURVE)}</g>`,
    'M1 6V18M5 8H13V4L23 12L13 20V16H5z', 'M1 7H13V3L23 12L13 21V17H1L4 12z', 'M1 5H15L23 12L15 19H1z', 'M1 5H16L23 12L16 19H1L7 12z',
    'M1 2H11V10H17V7L23 12L17 17V14H11V21H1z', 'M23 2H13V10H7V7L1 12L7 17V14H13V21H23z', 'M2 23V12H10V6H7L12 1L17 6H14V12H22V23z', 'M2 1V12H10V18H7L12 23L17 18H14V12H22V1z',
    'M1 12L6 8V10H8V2H16V10H18V8L23 12L18 16V14H16V21H8V14H6V16z', 'M12 1L16 5H14V8H17V10H19V8L23 12L19 16V14H17V17H14V19H16L12 23L8 19H10V17H7V14H5V16L1 12L5 8V10H7V8H10V5H8z',
    'M1 17V13C2 1 19 1 20 12H23L18 21L12 13H15C14 8 7 8 7 17z']],
  ['公式形状', ['M10 1H14V10H23V14H14V23H10V14H1V10H10z', 'M1 10H23V14H1z', 'M6 2L12 9L18 2L22 6L15 12L22 18L18 22L12 15L6 22L2 18L9 12L2 6z',
    p('M1 10H23V14H1z') + '<circle cx="12" cy="4" r="2"/><circle cx="12" cy="20" r="2"/>', 'M1 5H23V9H1zM1 14H23V18H1z', 'M1 5H11L12 1L17 3L16 6H23V9H15L14 14H23V18H12L11 23L7 22L8 18H1V14H9L10 9H1z']],
  ['流程图', ['M1 5H23V20H1z', 'M6 5H18Q23 5 23 10V15Q23 20 18 20H6Q1 20 1 15V10Q1 5 6 5z', 'M1 12L12 5L23 12L12 20z', 'M5 5H23L19 20H1z', 'M1 5H23V20H1zM7 5V20M17 5V20',
    'M2 3H22V21H2zM8 3V21M2 9H22', 'M1 5H23V17C15 14 11 24 1 20z', 'M1 9H17V17C11 16 9 22 1 20zM4 9V6H20V14H17M7 6V3H23V11H20', 'M6 7H18C25 7 25 17 18 17H6C-1 17 -1 7 6 7z',
    'M1 12L5 7H19L23 12L19 17H5z', 'M2 10L21 3V20H2z', 'M1 5H23L17 20H7z', oval(9, 9.5), 'M5 3H19Q21 3 21 5V16L12 22L3 16V5Q3 3 5 3z', 'M9 3H21V21H3V10z',
    'M1 4C8 9 14 1 23 6V20C15 16 9 24 1 20z', oval(10) + p('M5 5L19 19M19 5L5 19'), oval(10) + p('M12 2V22M2 12H22'), 'M5 3H19L5 21H19z', 'M12 2L20 12L12 22L4 12zM4 12H20',
    'M12 3L21 21H3z', 'M12 21L21 3H3z', 'M4 5H22Q19 12 22 20H4Q-1 12 4 5z', 'M3 4H12C26 4 26 20 12 20H3z', 'M22 21H12A10 10 0 1 1 20 17V18H22z',
    'M4 5C4 2 20 2 20 5V19C20 23 4 23 4 19zM4 5C4 8 20 8 20 5', 'M5 4H19C24 4 24 20 19 20H5C0 20 0 4 5 4zM19 4C14 4 14 20 19 20', 'M1 12L7 4H18Q21 4 21 8V16Q21 20 18 20H7z']],
  ['星与旗帜', ['M12 7L14 1L16 7L22 3L19 10L23 11L19 13L23 20L17 17L16 23L12 17L9 22L8 17L3 19L6 14L1 13L6 11L2 8L7 8L5 2L11 6z', 'M10 1L13 6L23 3L20 10L22 13L19 15L22 22L14 17L10 23L8 19L3 20L4 15L1 12L4 10L2 5L8 6z',
    star(4, 11, 4), star(5, 11, 5), star(6, 11, 6.5), star(7, 11.5, 8)].concat([8, 10, 12, 16, 24, 32].map(n => p(star(8, 11.5, 9)) + t(n)), [
    'M6 5H18V16H6zM6 7H1L3 12L1 17H9V16M18 7H23L21 12L23 17H15V16', 'M6 9H18V19H6zM6 17H1L3 12L1 6H9V9M18 17H23L21 12L23 6H15V9',
    'M6 6Q12 1 18 6V15Q12 12 6 15zM6 8L2 11L4 14L1 19L8 18V14M18 8L22 11L20 14L23 19L16 18V14', 'M6 10Q12 14 18 10V19Q12 23 6 19zM6 16L2 16L4 10L1 4L9 7V11M18 16L22 16L20 10L23 4L15 7V11',
    'M5 18V2H21C24 2 24 6 21 6H19V19C19 22 17 22 16 22H3C0 22 0 18 3 18H6V21M7 2Q10 2 9 6H21', 'M4 5H18V3C18 0 22 0 22 3V18H6V20C6 23 2 23 2 20V7Q2 5 4 5zM6 5V18M18 5H21M2 8H6',
    'M1 5C8 9 14 1 23 4V19C15 16 9 24 1 19z', 'M1 4Q4 9 8 5Q12 2 15 6Q19 9 23 4V19Q19 14 15 18Q12 22 8 18Q4 15 1 20z'])],
  ['标注', ['M1 4H23V19H12L8 23V19H1z', 'M6 4H18Q23 4 23 9V14Q23 19 18 19H12L8 23V19H6Q1 19 1 14V9Q1 4 6 4z', 'M8 19C-3 16 -1 3 12 3C26 3 26 19 12 19L7 23z',
    'M7 5C7 1 12 1 13 4C17 1 20 4 20 7C24 9 24 14 20 15C20 19 15 20 13 18C10 21 6 20 6 17C1 17 0 12 3 11C0 8 2 4 7 5zM6 21L8 22',
    'M9 2H22V20H9z' + A1, 'M9 2H22V20H9z' + A2, 'M9 1H22V18H9z' + A3,
    p('M13 2H23V20H13z', 'f') + p(BAR + A1), p('M13 2H23V20H13z', 'f') + p(BAR + A2), p('M13 1H23V18H13z', 'f') + p(BAR + A3),
    p('M9 2H23V20H9z', 'f') + p(A1), p('M9 2H23V20H9z', 'f') + p(A2), p('M9 1H23V18H9z', 'f') + p(A3),
    p('M13 2H22V20H13z', 'h') + p(BAR + A1), p('M13 2H22V20H13z', 'h') + p(BAR + A2), p('M13 1H22V18H13z', 'h') + p(BAR + A3)]],
  ['动作按钮', [BEVEL + 'M14 9V15L9 12z', BEVEL + 'M10 9V15L15 12z', BEVEL + 'M15 9V15L11 12zM8 9V15', BEVEL + 'M8 9V15L13 12zM16 9V15', FRAME + 'M7 17V11L12 6L17 11V17zM12 13V15',
    p(FRAME) + t('i', 17, 12, 'big'), FRAME + 'M7 12V14C7 18 14 18 14 14V9H17L13 6L10 9H12V13Q10 15 10 12z', FRAME + 'M5 8H14V16H5zM14 12L18 8V16zM7 11H10', FRAME + 'M7 7H14L17 11V17H7z',
    FRAME + 'M5 10H8L13 6V18L8 14H5zM15 8L18 6M15 12H18M15 15L18 17', p(FRAME) + t('?', 17, 12, 'big'), BEVEL]]
];
const gallery = document.getElementById('shapes');
let html = '';
for (const [name, list] of groups) {
  html += `<h3>${name}</h3><div class="cells">` + list.map((s, i) =>
    `<button aria-label="${name} ${i + 1}"${name === '基本形状' && i === 5 ? ' class="hot"' : ''}><svg viewBox="0 0 24 24">${s[0] === 'M' ? p(s) : s}</svg></button>`
  ).join('') + '</div>';
}
gallery.querySelector('h2').insertAdjacentHTML('afterend', html + '<div class="last"></div>');
```
